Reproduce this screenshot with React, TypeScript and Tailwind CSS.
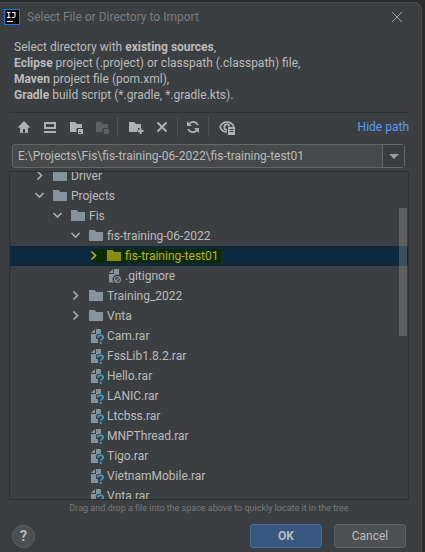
import React from "react";

type Kind = "folder" | "ignored" | "unknown";

interface Node {
  name: string;
  kind: Kind;
  level: number;
  open?: boolean;
  selected?: boolean;
}

const nodes: Node[] = [
  { name: "Driver", kind: "folder", level: 0, open: false },
  { name: "Projects", kind: "folder", level: 0, open: true },
  { name: "Fis", kind: "folder", level: 1, open: true },
  { name: "fis-training-06-2022", kind: "folder", level: 2, open: true },
  { name: "fis-training-test01", kind: "folder", level: 3, open: false, selected: true },
  { name: ".gitignore", kind: "ignored", level: 3 },
  { name: "Training_2022", kind: "folder", level: 2, open: false },
  { name: "Vnta", kind: "folder", level: 2, open: false },
  { name: "Cam.rar", kind: "unknown", level: 2 },
  { name: "FssLib1.8.2.rar", kind: "unknown", level: 2 },
  { name: "Hello.rar", kind: "unknown", level: 2 },
  { name: "LANIC.rar", kind: "unknown", level: 2 },
  { name: "Ltcbss.rar", kind: "unknown", level: 2 },
  { name: "MNPThread.rar", kind: "unknown", level: 2 },
  { name: "Tigo.rar", kind: "unknown", level: 2 },
  { name: "VietnamMobile.rar", kind: "unknown", level: 2 },
  { name: "Vnta.rar", kind: "unknown", level: 2 },
];

const indents = ["pl-6", "pl-[42px]", "pl-[60px]", "pl-[78px]"];

function Icon({ children }: { children: React.ReactNode }) {
  return (
    <svg width="16" height="16" viewBox="0 0 16 16" className="shrink-0" fill="none" aria-hidden="true">
      {children}
    </svg>
  );
}

function Chevron({ open, selected }: { open: boolean; selected?: boolean }) {
  return (
    <span className="z-10">
      <Icon>
        <path
          d={open ? "M1.500 5 5.500 9l4-4" : "M3.500 3.500 7.500 7.500l-4 4"}
          stroke={selected ? "#b5b52c" : "#adadad"}
          strokeWidth="1.6"
        />
      </Icon>
    </span>
  );
}

function NodeIcon({ kind, selected }: { kind: Kind; selected?: boolean }) {
  if (kind === "folder") {
    return (
      <Icon>
        <path d="M1 2h5.600l1.800 2H15v9H1z" fill={selected ? "#878f00" : "#87939a"} />
      </Icon>
    );
  }
  return (
    <Icon>
      <path d="M7 1v4H3z" fill="#87939a" />
      <path
        d={kind === "ignored" ? "M8 1h5v6a4.600 4.600 0 0 0-5 7.500H3V6h5z" : "M8 1h5v5H9.500L8 8v3h2v4H3V6h5z"}
        fill="#87939a"
      />
      {kind === "ignored" ? (
        <>
          <circle cx="11.500" cy="11.500" r="3" stroke="#87939a" strokeWidth="1.1" />
          <path d="m9.500 13.500 4-4" stroke="#87939a" strokeWidth="1.1" />
        </>
      ) : (
        <>
          <path d="M9.800 9.600c0-3 5.400-3 5.400 0 0 1.800-2.500 1.700-2.500 3.400" stroke="#3c3f41" strokeWidth="3" />
          <path d="M9.800 9.600c0-3 5.400-3 5.400 0 0 1.800-2.500 1.500-2.500 3.200" stroke="#3ba5cf" strokeWidth="1.600" />
          <path d="M11.700 14h2v1.800h-2z" fill="#3ba5cf" />
        </>
      )}
    </Icon>
  );
}

function Tool({ label, disabled, children }: { label: string; disabled?: boolean; children: React.ReactNode }) {
  return (
    <button type="button" aria-label={label} disabled={disabled} className="flex size-[22px] items-center justify-center">
      <Icon>{children}</Icon>
    </button>
  );
}

function Divider() {
  return <span className="h-5 w-px bg-[#515151]" />;
}

export default function App() {
  return (
    <div className="min-h-screen bg-[#2b2b2b] pt-0.5 pr-[3px] font-[Roboto,'Noto_Sans',sans-serif] text-[12px] text-[#bbbbbb]">
      <main className="flex min-h-[550px] flex-col rounded-tr-lg border-t border-r border-[#484a4b] bg-[#3c3f41] pr-3">
        <header className="flex h-7 items-center gap-[7px] pl-1">
          <svg width="16" height="16" viewBox="0 0 16 16" className="shrink-0" aria-hidden="true">
            <path d="M0 0h16v16H0z" fill="#087cfa" />
            <path d="M1 1h14v14H1z" fill="#000" />
            <path d="M3 3.500h3.500M3 8.500h3.500M4.800 3.500v5M8 3.500h3v3.600q0 1.400-1.500 1.400H8M3 12.500h6" stroke="#fff" strokeWidth="1.100" fill="none" />
          </svg>
          <h1 className="flex-1 text-[12px] text-[#7b7d7e]">Select File or Directory to Import</h1>
          <button type="button" aria-label="Close" className="mr-1 flex size-4 items-center justify-center">
            <Icon>
              <path d="m3 3 10 10M13 3 3 13" stroke="#a0a2a3" />
            </Icon>
          </button>
        </header>

        <p className="mt-2 pl-3.5 leading-4">
          Select directory with <b>existing sources</b>,<br />
          <b>Eclipse</b> project (.project) or classpath (.classpath) file,
          <br />
          <b>Maven</b> project file (pom.xml),
          <br />
          <b>Gradle</b> build script (*.gradle, *.gradle.kts).
        </p>

        <div className="mt-[9px] ml-[9px] border-t border-[#2f3133]" />

        <div className="flex h-7 items-center gap-1 pl-[13px]">
          <Tool label="Home directory">
            <path d="M8 2 1.500 8.500H4V14h3v-4h2v4h3V8.500h2.500z" fill="#afb1b3" />
          </Tool>
          <Tool label="Desktop directory">
            <path d="M3 4h10v5H3z" stroke="#afb1b3" strokeWidth="2" />
            <path d="M2 12h12v2H2z" fill="#afb1b3" />
          </Tool>
          <Tool label="Project directory">
            <path d="M2 3h5l2 2h5v4H8.500v4H2z" fill="#afb1b3" />
            <path d="M10 10h5v5h-5z" fill="#afb1b3" />
            <path d="M11 13h2v1h-2z" fill="#3c3f41" />
          </Tool>
          <Tool label="Module directory" disabled>
            <path d="M2 3h5l2 2h5v4H8.500v4H2zM10 10h5v5h-5z" fill="#5d5f60" />
          </Tool>
          <Divider />
          <div className="flex items-center gap-1 pl-[3px]">
            <Tool label="New folder">
              <path d="M1 3h5l2 2h5v4h-3v2H9v2H1z" fill="#afb1b3" />
              <path d="M12.500 9v6M9.500 12h6" stroke="#afb1b3" strokeWidth="2" />
            </Tool>
            <Tool label="Delete">
              <path d="m3.500 3.500 9 9m0-9-9 9" stroke="#afb1b3" strokeWidth="2" />
            </Tool>
          </div>
          <Divider />
          <Tool label="Refresh">
            <path d="M12.800 6A5 5 0 0 0 4 5M3.200 10A5 5 0 0 0 12 11" stroke="#afb1b3" strokeWidth="1.800" />
            <path d="M2 2v5h5zM14 14V9H9z" fill="#afb1b3" />
          </Tool>
          <Divider />
          <div className="pl-[3px]">
            <Tool label="Show hidden files">
              <path d="M8 13C4.500 13 2 10.500 1 8c2.800-6.400 11.200-6.400 14 0" stroke="#afb1b3" strokeWidth="1.700" />
              <path d="M8 10.800A2.700 2.700 0 1 1 10.600 7.500" stroke="#afb1b3" strokeWidth="1.700" />
              <path d="M9 8h7v8H9z" fill="#afb1b3" />
              <path d="M10.500 10.500h4m-4 2h4" stroke="#3c3f41" />
            </Tool>
          </div>
          <a href="#path" className="ml-auto text-[#589df6]">Hide path</a>
        </div>

        <div className="mt-[3px] mr-1 ml-3 flex h-6 rounded-[3px] border border-[#646668] bg-[#45494a]">
          <input
            id="path"
            aria-label="Path"
            defaultValue="E:\Projects\Fis\fis-training-06-2022\fis-training-test01"
            className="min-w-0 flex-1 bg-transparent pl-[5px] outline-none"
          />
          <button type="button" aria-label="Recent paths" className="flex w-[22px] items-center justify-center border-l border-[#646668] bg-[#3c3f41]">
            <svg width="10" height="5" viewBox="0 0 10 5" aria-hidden="true">
              <path d="M0 0h10L5 5z" fill="#9a9da0" />
            </svg>
          </button>
        </div>

        <div className="relative mt-[3px] ml-[9px] h-[329px] overflow-hidden border border-[#2f3133]">
          <ul role="tree" aria-label="Files" className="-mt-1.5">
            {nodes.map((node) => (
              <li
                key={node.name}
                role="treeitem"
                aria-selected={!!node.selected}
                aria-expanded={node.open}
                className={`flex h-5 items-center ${indents[node.level]} ${node.selected ? "bg-[#0d293e]" : ""}`}
              >
                {node.open === undefined ? <span className="w-4" /> : <Chevron open={node.open} selected={node.selected} />}
                <span
                  className={`flex h-3.5 items-center gap-[3px] ${node.selected ? "-ml-3 bg-[#0d2900] pr-0.5 pl-3.5 text-[#bbbb00]" : "pl-0.5"}`}
                >
                  <NodeIcon kind={node.kind} selected={node.selected} />
                  <span>{node.name}</span>
                </span>
              </li>
            ))}
          </ul>
          <div className="absolute top-9 right-px h-32 w-2 bg-[#a6a6a6]/30" />
        </div>

        <p className="pl-[9px] text-center text-[9px] leading-4 text-[#777777]">
          Drag and drop a file into the space above to quickly locate it in the tree
        </p>

        <footer className="mt-2 flex items-center gap-3 pr-[3px] pl-3">
          <button type="button" aria-label="Help" className="mr-auto size-[23px] rounded-full border border-[#5e6060] bg-[#4c5052] text-[15px] leading-5 font-semibold">
            ?
          </button>
          <button type="button" className="h-6 w-[72px] rounded-[3px] border border-[#4c708c] bg-[#365880] font-bold">OK</button>
          <button type="button" className="h-6 w-[72px] rounded-[3px] border border-[#5e6060] bg-[#4c5052]">Cancel</button>
        </footer>
      </main>
    </div>
  );
}
